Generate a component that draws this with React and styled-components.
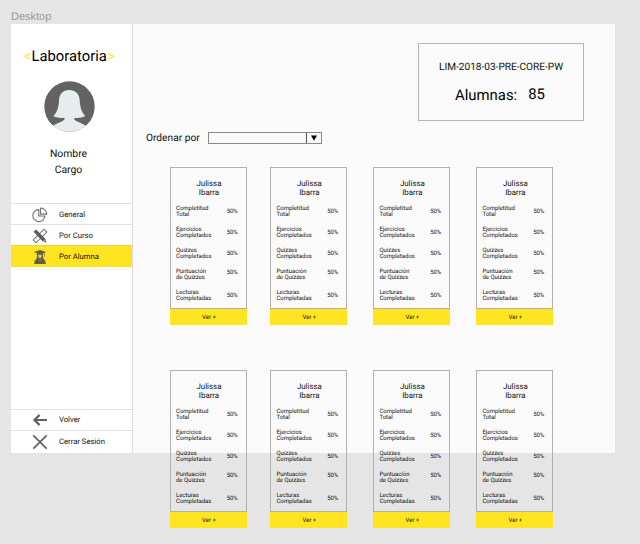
import React from "react";
import styled, { createGlobalStyle } from "styled-components";

const Global = createGlobalStyle`
  *, *::before, *::after { box-sizing: border-box; }
  body {
    margin: 0;
    background: #e5e5e5;
    font-family: Roboto, sans-serif;
    color: #111;
    text-rendering: geometricPrecision;
  }
`;

const Page = styled.div`
  height: 544px;
  overflow: hidden;
  padding-left: 11px;
`;

const FrameLabel = styled.div`
  height: 24px;
  padding-top: 11px;
  font: 11px/13px "Liberation Sans", Arial, sans-serif;
  color: #999;
`;

const Artboard = styled.div`
  display: flex;
  width: 604px;
  height: 429px;
  background: #fafafa;
`;

const Sidebar = styled.aside`
  display: flex;
  flex-direction: column;
  flex: none;
  width: 121px;
  height: 429px;
  background: #fff;
  box-shadow: 1px 0 0 #dcdcdc;
`;

const Logo = styled.div`
  margin-top: 22px;
  padding-left: 13px;
  font-size: 14.8px;
  line-height: 20px;
  color: #000;
  white-space: nowrap;
  span { color: #ffe521; }
`;

const Avatar = styled.svg`
  display: block;
  width: 51px;
  height: 51px;
  margin: 15px 0 0 33px;
`;

const Profile = styled.div`
  margin: 14px 0 0 0;
  width: 115px;
  height: 31px;
  text-align: center;
  font-size: 10.4px;
  line-height: 15.5px;
`;

const Menu = styled.nav`
  display: flex;
  flex-direction: column;
  margin-top: ${(p) => (p.$bottom ? "auto" : "26px")};
`;

const MenuItem = styled.a`
  display: flex;
  align-items: center;
  height: ${(p) => p.$height || 21}px;
  padding-top: ${(p) => p.$drop || 0}px;
  padding-left: 21px;
  gap: 11px;
  border-top: 1px solid ${(p) => (p.$active ? "#e6d23c" : "#e2e2e2")};
  background: ${(p) => (p.$active ? "#ffe521" : "transparent")};
  font-size: 7.7px;
  line-height: 10px;
  svg { flex: none; width: 16px; height: 16px; }
`;

const Content = styled.main`
  flex: 1;
  padding: 19px 0 0 14px;
`;

const Summary = styled.section`
  width: 166px;
  height: 78px;
  margin-left: 271.5px;
  padding: 16px 0 0 20.5px;
  border: 1px solid #b4b4b4;
`;

const Cohort = styled.div`
  font-size: 10.1px;
  line-height: 16px;
  white-space: nowrap;
`;

const Total = styled.div`
  display: flex;
  gap: 11px;
  padding: 9px 0 0 16px;
  font-size: 14.9px;
  line-height: 20px;
  color: #000;
`;

const TotalValue = styled.span`
  margin-top: -1px;
`;

const Sorter = styled.div`
  display: flex;
  align-items: center;
  height: 12px;
  margin-top: 11px;
  font-size: 10.2px;
`;

const SortLabel = styled.span`
  width: 61.5px;
  white-space: nowrap;
`;

const Select = styled.div`
  display: flex;
  justify-content: flex-end;
  width: 114px;
  height: 12px;
  border: 1px solid #888;
`;

const Arrow = styled.div`
  display: flex;
  align-items: center;
  justify-content: center;
  width: 15px;
  border-left: 1px solid #555;
  svg { width: 6px; height: 6px; }
`;

const Cards = styled.div`
  display: grid;
  grid-template-columns: 100.4px 103px 103px 77px;
  row-gap: 45px;
  margin: 23px 0 0 24px;
`;

const Card = styled.article`
  width: 77px;
  height: 158px;
`;

const CardBody = styled.div`
  height: 142px;
  padding: 11px 8.5px 0 5px;
  border: 1px solid #b0b0b0;
`;

const Name = styled.h3`
  margin: 0;
  padding-top: 1px;
  padding-left: 4.5px;
  font-size: 7.9px;
  line-height: 8.7px;
  font-weight: 400;
  text-align: center;
`;

const Metric = styled.div`
  display: flex;
  justify-content: space-between;
  height: 21px;
  font-size: 6px;
  line-height: 6.7px;
  letter-spacing: -0.02px;
  white-space: nowrap;
`;

const Metrics = styled.div`
  padding-top: 8.1px;
`;

const Value = styled.span`
  padding-top: ${(p) => p.$top}px;
  letter-spacing: -0.15px;
`;

const Button = styled.button`
  display: block;
  width: 77px;
  height: 16px;
  padding: 1px 0 0 1px;
  border: 0;
  background: #ffe521;
  font: 6.1px/15px Roboto, sans-serif;
  letter-spacing: -0.05px;
  color: #222;
  text-rendering: geometricPrecision;
`;

const PieIcon = () => (
  <svg viewBox="0 0 16 16" fill="none" stroke="#707070" strokeWidth="1.1">
    <path d="M6.8 2.6A6 6 0 1 0 12.8 9H6.8Z" />
    <path d="M8.6 1V7.1H14.7A6.1 6.1 0 0 0 8.6 1Z" />
  </svg>
);

const ToolsIcon = () => (
  <svg viewBox="0 0 16 16">
    <path d="M11.9 1.2L14.8 4.1L4.1 14.8L1.2 11.9Z" fill="none" stroke="#777" strokeWidth="1.1" />
    <path d="M10 3.2l1.2 1.2M3.4 9.7l1.2 1.2M5 8.1l.8.8" stroke="#777" strokeWidth=".7" />
    <path d="M1.6 3.7L4.1 1.4L13 10.4L14.7 14.7L10.3 12.9Z" fill="#5c5c5c" />
    <path d="M11.7 12.5L12.6 11.7L13.6 13.6Z" fill="#ddd" />
  </svg>
);

const GraduateIcon = () => (
  <svg viewBox="0 0 16 16">
    <path d="M8 .9L14 3L12.7 3.6V7.5H12.1V3.9L11.1 4.3V7.2C11.1 9 11.5 10 12 10.6L13.3 11.5L13.8 15H2.2L2.7 11.5L4 10.6C4.6 9.8 4.9 8.8 4.9 7.2V4.3L2 3Z" fill="#625e46" />
    <path d="M6.1 5.8Q8 5.3 9.9 5.8V7.3Q9.5 9.3 8 9.5Q6.5 9.3 6.1 7.3Z" fill="#d9c53f" />
    <path d="M6.8 10.6L8 11.8L9.2 10.6" fill="none" stroke="#c9b745" strokeWidth=".5" />
  </svg>
);

const BackIcon = () => (
  <svg viewBox="0 0 16 16" fill="none" stroke="#606060" strokeWidth="2.2">
    <path d="M7.6 2.9L2.5 8L7.6 13.1M2.5 8H15" />
  </svg>
);

const CloseIcon = () => (
  <svg viewBox="0 0 16 16" fill="none" stroke="#606060" strokeWidth="1.7">
    <path d="M1.3 1.3L14.7 14.7M14.7 1.3L1.3 14.7" />
  </svg>
);

const metrics = [
  { lines: ["Completitud", "Total"], top: 3.2 },
  { lines: ["Ejercicios", "Completados"], top: 3.2 },
  { lines: ["Quizzes", "Completados"], top: 3.2 },
  { lines: ["Puntuación", "de Quizzes"], top: 1.2 },
  { lines: ["Lecturas", "Completadas"], top: 3.6 },
];

const StudentCard = () => (
  <Card>
    <CardBody>
      <Name>Julissa<br />Ibarra</Name>
      <Metrics>
        {metrics.map(({ lines, top }) => (
          <Metric key={lines.join()}>
            <span>{lines[0]}<br />{lines[1]}</span>
            <Value $top={top}>50%</Value>
          </Metric>
        ))}
      </Metrics>
    </CardBody>
    <Button>Ver +</Button>
  </Card>
);

export default function App() {
  return (
    <Page>
      <Global />
      <FrameLabel>Desktop</FrameLabel>
      <Artboard>
        <Sidebar>
          <Logo><span>&lt;</span>Laboratoria<span>&gt;</span></Logo>
          <Avatar viewBox="0 0 51 51">
            <circle cx="25.5" cy="25.5" r="25.2" fill="#636363" />
            <path d="M25.2 9C18.5 9 15.3 13.5 15 19.5C14.7 27 12.8 31.5 9.6 34.8C10.5 36.8 16 37 20.3 37C21.8 38.4 19 40 16.5 41C13.5 42.2 11 43.5 9.2 44.7A25.2 25.2 0 0 0 41.8 44.7C39.6 43.2 37 42 34.5 41C31.5 39.8 29 38.5 30.7 37C35 37.2 40 36.5 41.2 34.8C38 31.5 36 27 35.7 19.5C35.4 13.5 32 9 25.2 9Z" fill="#e7eded" />
          </Avatar>
          <Profile>Nombre<br />Cargo</Profile>
          <Menu>
            <MenuItem $drop={2}><PieIcon />General</MenuItem>
            <MenuItem $drop={1}><ToolsIcon />Por Curso</MenuItem>
            <MenuItem $active $height={22}><GraduateIcon />Por Alumna</MenuItem>
          </Menu>
          <Menu $bottom>
            <MenuItem><BackIcon />Volver</MenuItem>
            <MenuItem $height={23}><CloseIcon />Cerrar Sesión</MenuItem>
          </Menu>
        </Sidebar>
        <Content>
          <Summary>
            <Cohort>LIM-2018-03-PRE-CORE-PW</Cohort>
            <Total>Alumnas:<TotalValue>85</TotalValue></Total>
          </Summary>
          <Sorter>
            <SortLabel>Ordenar por</SortLabel>
            <Select>
              <Arrow>
                <svg viewBox="0 0 6 6"><path d="M0 .5H6L3 5.8Z" fill="#000" /></svg>
              </Arrow>
            </Select>
          </Sorter>
          <Cards>
            {Array.from({ length: 8 }, (_, i) => <StudentCard key={i} />)}
          </Cards>
        </Content>
      </Artboard>
    </Page>
  );
}
